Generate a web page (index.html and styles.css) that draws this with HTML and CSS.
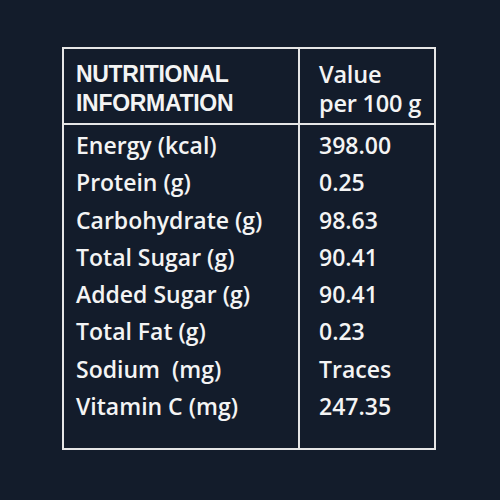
FILE: index.html
```html
<!DOCTYPE html>
<html>
<head>
<meta charset="utf-8">
<link rel="stylesheet" href="styles.css">
</head>
<body>
<div class="panel">
  <div class="cell head left">
    <div class="title">NUTRITIONAL<br>INFORMATION</div>
  </div>
  <div class="cell head right">
    <div class="sub">Value<br>per 100 g</div>
  </div>
  <div class="cell body left">
    <div class="row">Energy (kcal)</div>
    <div class="row">Protein (g)</div>
    <div class="row">Carbohydrate (g)</div>
    <div class="row">Total Sugar (g)</div>
    <div class="row">Added Sugar (g)</div>
    <div class="row">Total Fat (g)</div>
    <div class="row">Sodium &nbsp;(mg)</div>
    <div class="row">Vitamin C (mg)</div>
  </div>
  <div class="cell body right">
    <div class="row">398.00</div>
    <div class="row">0.25</div>
    <div class="row">98.63</div>
    <div class="row">90.41</div>
    <div class="row">90.41</div>
    <div class="row">0.23</div>
    <div class="row">Traces</div>
    <div class="row">247.35</div>
  </div>
</div>
</body>
</html>
```
FILE: styles.css
```css
html, body {
  margin: 0;
  padding: 0;
  background: #131c2b;
}
body {
  width: 500px;
  height: 500px;
  padding: 47px 0 0 62px;
  box-sizing: border-box;
  color: #f4f4f4;
  font-family: "Open Sans", sans-serif;
}
.panel {
  width: 374px;
  height: 403px;
  box-sizing: border-box;
  border: 2px solid #e6e6e6;
  display: grid;
  grid-template-columns: 236px 134px;
  grid-template-rows: 76px 1fr;
}
.cell.left {
  border-right: 2px solid #e6e6e6;
  padding-left: 12px;
}
.cell.right {
  padding-left: 19px;
}
.cell.head {
  border-bottom: 2px solid #e6e6e6;
  padding-top: 11px;
}
.title {
  font-family: "Liberation Sans", Arial, sans-serif;
  font-weight: bold;
  font-size: 23px;
  line-height: 29px;
  letter-spacing: -0.3px;
}
.sub {
  font-size: 23.5px;
  font-weight: 600;
  line-height: 28.5px;
  letter-spacing: -0.2px;
}
.cell.body {
  padding-top: 2px;
}
.row {
  font-size: 23px;
  font-weight: 600;
  line-height: 37.3px;
  height: 37.3px;
  white-space: nowrap;
}
```
